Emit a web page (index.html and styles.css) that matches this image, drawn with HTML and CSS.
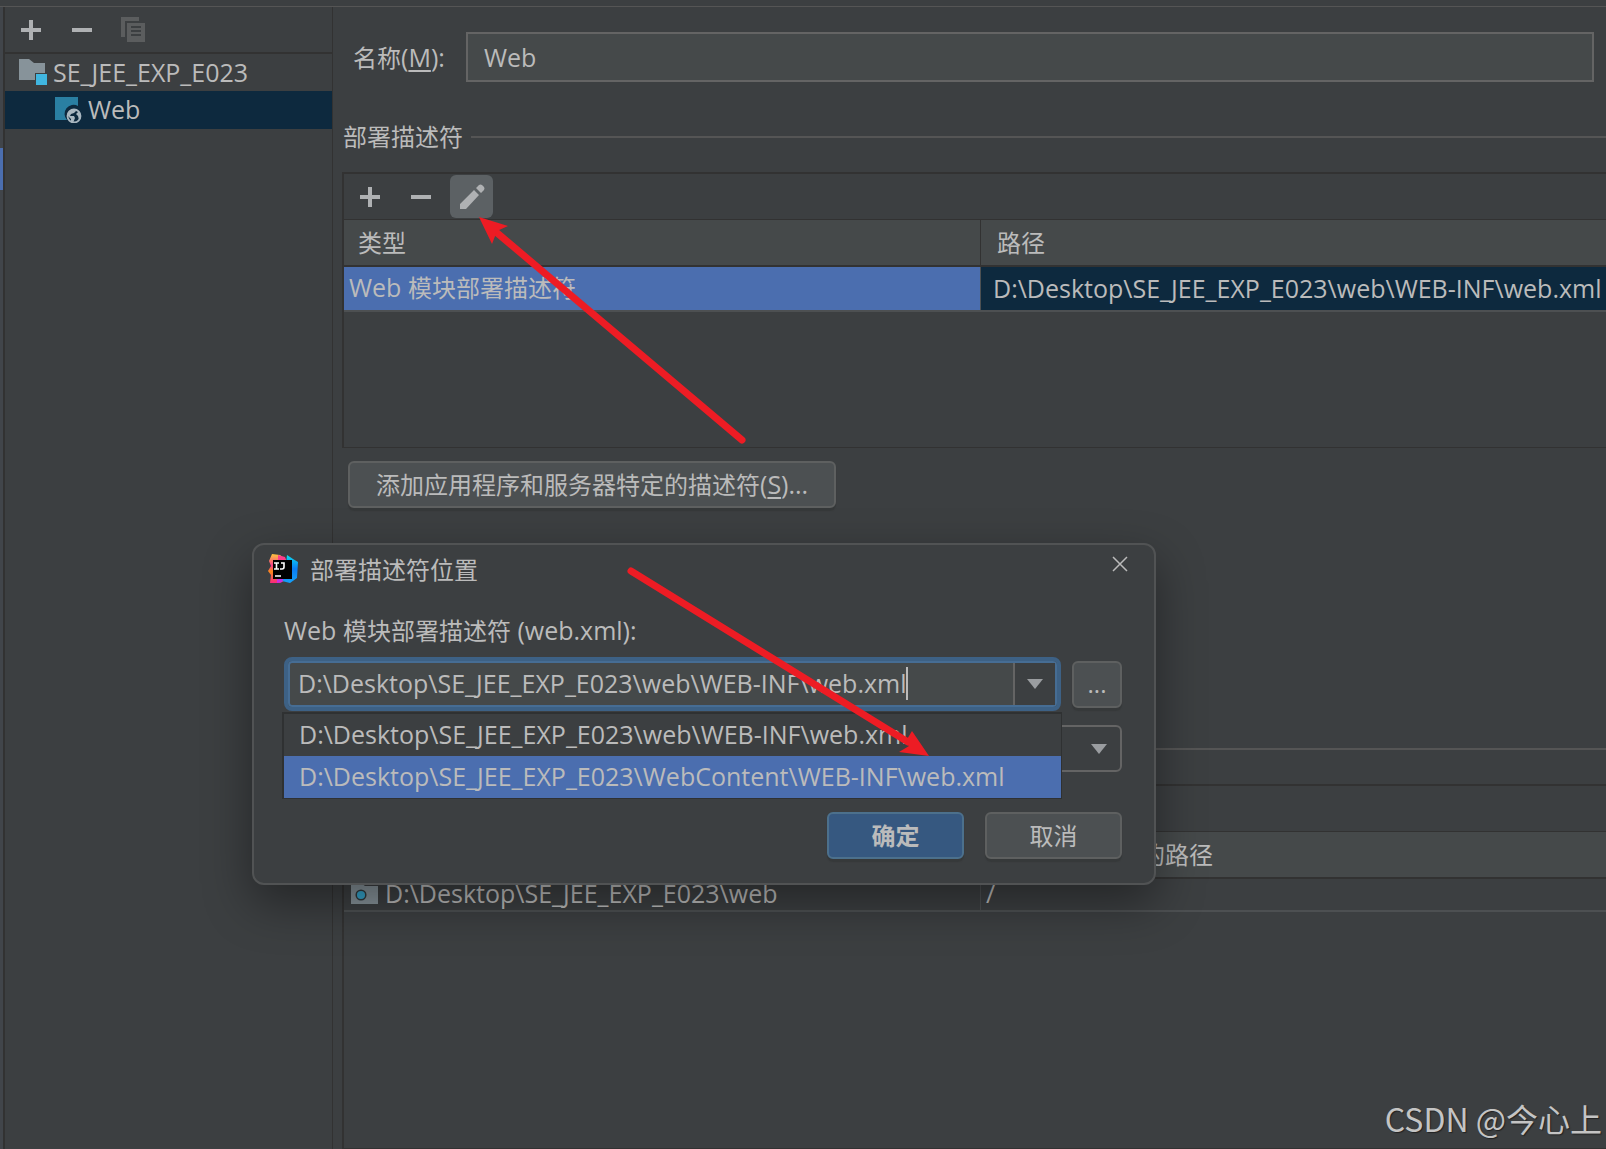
FILE: index.html
```html
<!DOCTYPE html>
<html lang="zh-CN">
<head>
<meta charset="utf-8">
<title>项目结构</title>
<link rel="stylesheet" href="styles.css">
</head>
<body>
<svg class="sprite" aria-hidden="true">
  <symbol id="plus" viewBox="0 0 20 20"><path d="M8 0h4v8h8v4h-8v8H8v-8H0V8h8z"/></symbol>
  <symbol id="minus" viewBox="0 0 20 20"><path d="M0 8h20v4H0z"/></symbol>
  <symbol id="down" viewBox="0 0 16 10"><path d="M0 0h16L8 10z"/></symbol>
</svg>

<div class="top-edge"></div>
<div class="window">
  <div class="strip"><div class="strip-mark"></div></div>

  <aside class="sidebar">
    <div class="toolbar side-toolbar">
      <button class="tool" aria-label="添加"><svg class="glyph"><use href="#plus"/></svg></button>
      <button class="tool" aria-label="移除"><svg class="glyph"><use href="#minus"/></svg></button>
      <button class="tool" aria-label="复制" disabled>
        <svg class="copy" viewBox="0 0 24 26"><path fill="#5b5d5e" d="M0 0h18v4H4v16H0z"/><path fill="#5b5d5e" fill-rule="evenodd" d="M6 6h18v19H6zM10 9v2h10V9zM10 13v2h10v-2zM10 17v2h10v-2z"/></svg>
      </button>
    </div>
    <ul class="tree">
      <li class="node">
        <svg class="node-icon" viewBox="0 0 30 28"><path fill="#87939a" d="M1 1h10l5 4h11v10H17v7H1z"/><path fill="#40b6e0" d="M18 16h11v11H18z"/></svg>
        <span class="latin">SE_JEE_EXP_E023</span>
      </li>
      <li class="node child selected">
        <svg class="node-icon" viewBox="0 0 30 28"><path fill="#2a7fa2" d="M2 2h23v9a9 9 0 0 0-11 14H2z"/><circle cx="21" cy="21" r="6.500" fill="none" stroke="#a9b7c0" stroke-width="1.800"/><path fill="#a9b7c0" d="M14 20l2-4 6-2 1 2-2 2-3 1-1 2h4l1 2-2 5-2-1v-3l-3-3zM26 16l2 5-2 4-1-4-2-2z"/></svg>
        <span class="latin">Web</span>
      </li>
    </ul>
  </aside>

  <main class="main">
    <div class="name-row">
      <label for="name">名称<span class="latin">(<u>M</u>):</span></label>
      <input id="name" class="name-input latin" type="text" value="Web">
    </div>

    <h2 class="section">部署描述符</h2>
    <section class="box descriptors">
      <div class="toolbar">
        <button class="tool" aria-label="添加"><svg class="glyph"><use href="#plus"/></svg></button>
        <button class="tool" aria-label="移除"><svg class="glyph"><use href="#minus"/></svg></button>
        <button class="tool active" aria-label="编辑">
          <svg class="pencil" viewBox="0 0 26 26"><path d="M1 20L15 6l5 5L7 25H1zM17 4l3-3q1.500-1 3 0l2 2q1 1.500 0 3l-3 3z"/></svg>
        </button>
      </div>
      <table class="grid">
        <colgroup><col class="col-first"><col></colgroup>
        <thead><tr><th>类型</th><th>路径</th></tr></thead>
        <tbody><tr class="picked"><td><span class="latin">Web </span>模块部署描述符</td><td class="latin">D:\Desktop\SE_JEE_EXP_E023\web\WEB-INF\web.xml</td></tr></tbody>
      </table>
    </section>
    <button class="btn add-specific">添加应用程序和服务器特定的描述符<span class="latin">(<u>S</u>)...</span></button>

    <div class="section resources-title"></div>
    <section class="box resources">
      <div class="toolbar"></div>
      <table class="grid compact">
        <colgroup><col class="col-first"><col></colgroup>
        <thead><tr><th></th><th>相对于部署根的路径</th></tr></thead>
        <tbody><tr>
          <td class="latin"><span class="with-icon"><svg class="folder" viewBox="0 0 27 21"><path fill="#87939a" d="M0 0h10l4 3h13v18H0z"/><circle cx="10" cy="12" r="4.800" fill="#35a4cc" stroke="#333a3d" stroke-width="1.500"/></svg>D:\Desktop\SE_JEE_EXP_E023\web</span></td>
          <td class="latin">/</td>
        </tr></tbody>
      </table>
    </section>
  </main>
</div>

<div class="dialog" role="dialog" aria-labelledby="dialog-title">
  <header class="dialog-head">
    <svg class="logo" viewBox="0 0 30 30">
      <defs>
        <linearGradient id="warm" x1="0" y1="0" x2="0" y2="1"><stop offset="0" stop-color="#fdc63a"/><stop offset=".4" stop-color="#fb3d8a"/><stop offset=".6" stop-color="#fb8a1c"/><stop offset="1" stop-color="#f9267f"/></linearGradient>
        <linearGradient id="cool" x1="0" y1="0" x2="0" y2="1"><stop offset="0" stop-color="#0bdcf0"/><stop offset=".5" stop-color="#0a7cf5"/><stop offset="1" stop-color="#15a2fa"/></linearGradient>
      </defs>
      <path fill="url(#warm)" d="M4 0l8 1 6 5v20l-6 3H2l1-8-3-4 3-5-2-5z"/>
      <path fill="#fb3d8a" d="M10 1l7 2 2 5h-9z"/>
      <path fill="url(#cool)" d="M19 1l6 4 5 3-1 16-7 5-8-2 3-6z"/>
      <path fill="#c52ee6" d="M9 23h7l-2 5-5 1z"/>
      <path fill="#000" d="M5 6h19v19H5z"/>
      <path fill="none" stroke="#fff" stroke-width="1.600" d="M6 9h5M8.500 9v6M6 15h5M13 9h3v4q0 2-2 2h-2M7 22h6"/>
    </svg>
    <h1 id="dialog-title" class="dialog-title">部署描述符位置</h1>
    <button class="close" aria-label="关闭"><svg class="cross" viewBox="0 0 16 16"><path d="M1 1l14 14M15 1L1 15"/></svg></button>
  </header>
  <div class="dialog-body">
    <label class="location-label" for="location"><span class="latin">Web </span>模块部署描述符<span class="latin"> (web.xml):</span></label>
    <div class="location-row">
      <div class="combo">
        <input id="location" class="combo-input latin" type="text" value="D:\Desktop\SE_JEE_EXP_E023\web\WEB-INF\web.xml">
        <span class="caret"></span>
        <button class="combo-toggle" aria-label="展开"><svg class="arrow"><use href="#down"/></svg></button>
        <ul class="popup latin" role="listbox" aria-label="位置">
          <li role="option">D:\Desktop\SE_JEE_EXP_E023\web\WEB-INF\web.xml</li>
          <li role="option" aria-selected="true" class="hot">D:\Desktop\SE_JEE_EXP_E023\WebContent\WEB-INF\web.xml</li>
        </ul>
      </div>
      <button class="btn browse">...</button>
    </div>
    <div class="version">
      <select class="version-select" aria-label="版本"><option></option></select>
      <svg class="arrow version-arrow"><use href="#down"/></svg>
    </div>
    <footer class="actions">
      <button class="btn action primary">确定</button>
      <button class="btn action">取消</button>
    </footer>
  </div>
</div>

<svg class="annotations" width="1000" height="800" viewBox="0 0 1000 800" aria-hidden="true">
  <g fill="none" stroke="#ed1c24" stroke-width="7" stroke-linecap="round"><path d="M742 440L496 232"/><path d="M631 571L908 742"/></g>
  <path fill="#ed1c24" d="M479 217l29 9-11 5-5 13zM929 756l-30-4 10-6-3-5 6-10z"/>
</svg>
<div class="watermark">CSDN @今心上</div>
</body>
</html>
```

FILE: styles.css
```css
* { box-sizing: border-box; }

body {
  margin: 0;
  height: 100vh;
  overflow: hidden;
  display: flex;
  flex-direction: column;
  position: relative;
  background: #3c3f41;
  color: #bbbbbb;
  font: 24px/36px "Open Sans", "Noto Sans CJK SC", sans-serif;
}

button, input, select { font: inherit; color: inherit; }
button { padding: 0; border: 0; background: none; }
ul { margin: 0; padding: 0; list-style: none; }
h1, h2 { margin: 0; font-size: 24px; font-weight: 400; }
svg { display: block; flex: none; }
u { text-decoration-thickness: 2px; text-underline-offset: 3px; }

/* Latin text is set a little larger than the Chinese text around it */
.latin { font-size: 25px; }

.sprite { position: absolute; width: 0; height: 0; }

.top-edge { height: 7px; flex: none; border-bottom: 1px solid #555555; }
.window { flex: 1; min-height: 0; display: flex; }

.strip { width: 5px; flex: none; border-right: 2px solid #323232; background: #41454a; }
.strip-mark { height: 42px; margin-top: 141px; background: #4b6eaf; }

/* sidebar */
.sidebar { width: 328px; flex: none; border-right: 1px solid #323232; }
.toolbar { height: 45px; display: flex; align-items: center; gap: 8px; padding-left: 4px; }
.side-toolbar { height: 47px; border-bottom: 2px solid #323232; }
.tool {
  width: 43px;
  height: 43px;
  display: flex;
  align-items: center;
  justify-content: center;
  border-radius: 6px;
}
.tool.active { background: #5c6164; }
.glyph { width: 20px; height: 20px; fill: #afb1b3; }
.copy { width: 24px; height: 26px; }
.pencil { width: 26px; height: 26px; fill: #afb1b3; }

.node { height: 37px; display: flex; align-items: center; gap: 5px; padding: 0 0 2px 13px; }
.node-icon { width: 30px; height: 28px; }
.node.child { padding-left: 48px; height: 38px; }
.node.selected { background: #0d293e; }

/* main panel */
.main { flex: 1; min-width: 0; display: flex; flex-direction: column; padding: 25px 0 0 9px; }
.name-row { display: flex; align-items: center; padding: 0 12px 0 11px; flex: none; }
.name-row label { width: 113px; }
.name-input {
  flex: 1;
  min-width: 0;
  height: 50px;
  padding: 0 16px;
  border: 2px solid #646464;
  background: #45494a;
}

.section { display: flex; align-items: center; gap: 8px; margin-top: 37px; padding-left: 1px; flex: none; }
.section::after { content: ""; flex: 1; height: 2px; background: #555555; }

.box { margin-top: 17px; border: solid #323232; border-width: 2px 0 1px 2px; overflow: hidden; }
.descriptors { height: 276px; flex: none; }
.resources-title { height: 36px; margin-top: 223px; }
.resources { flex: 1; }

.grid { width: 100%; table-layout: fixed; border-spacing: 0; border-top: 1px solid #323232; }
.col-first { width: 637px; }
.grid th {
  height: 47px;
  padding: 0 0 0 16px;
  text-align: left;
  font-weight: 400;
  background: #45494a;
  border-bottom: 2px solid #323232;
}
.grid th:first-child { padding-left: 14px; border-right: 1px solid #323232; }
.grid td {
  height: 45px;
  padding: 0 0 2px 12px;
  white-space: nowrap;
  border-bottom: 2px solid #4d5052;
}
.grid td:first-child { padding-left: 5px; border-right: 1px solid #4d5052; }
.picked td { background: #0d293e; }
.picked td:first-child { background: #4b6eaf; }
.compact td { height: 33px; padding: 0 0 2px 5px; line-height: 29px; }
.compact td:first-child { padding-left: 7px; }
.with-icon { display: flex; align-items: center; gap: 7px; }
.folder { width: 27px; height: 21px; }

.btn {
  height: 47px;
  border: 2px solid #5e6060;
  border-radius: 6px;
  background: #4c5052;
  box-shadow: 0 3px 1px #36393a;
}
.add-specific { flex: none; align-self: flex-start; margin: 13px 0 0 6px; padding: 0 26px; }

/* dialog */
.dialog {
  position: absolute;
  left: 252px;
  top: 543px;
  width: 904px;
  border: 2px solid #515354;
  border-radius: 12px;
  background: #3c3f41;
  box-shadow: 0 18px 48px rgba(0, 0, 0, .4);
}
.dialog-head { display: flex; align-items: flex-start; gap: 12px; padding: 7px 26px 0 14px; }
.logo { width: 30px; height: 30px; margin-top: 2px; }
.dialog-title { flex: 1; }
.close { margin-top: 4px; }
.cross { width: 16px; height: 16px; fill: none; stroke: #bbbbbb; stroke-width: 1.5; }

.dialog-body { display: flex; flex-direction: column; padding: 24px 32px 24px 30px; }
.location-label { height: 36px; white-space: pre; }
.location-row { display: flex; align-items: center; justify-content: space-between; margin-top: 9px; }
.combo {
  position: relative;
  display: flex;
  width: 777px;
  height: 54px;
  border: 4px solid #3d6185;
  border-radius: 8px;
  background: #45494a;
  box-shadow: inset 0 0 0 2px #466d94;
  padding: 2px;
}
.combo-input { flex: 1; min-width: 0; border: 0; background: none; padding: 0 8px 2px; outline: 0; }
.caret { position: absolute; left: 618px; top: 6px; width: 2px; height: 33px; background: #bbbbbb; }
.combo-toggle {
  width: 42px;
  display: flex;
  align-items: center;
  justify-content: center;
  border-left: 2px solid #646464;
  background: #3c3f41;
}
.arrow { width: 16px; height: 10px; fill: #9a9da0; }
.popup {
  position: absolute;
  left: -6px;
  top: 51px;
  width: 780px;
  z-index: 1;
  border: solid #2f3132;
  border-width: 2px 1px 1px 2px;
  background: #3c3f41;
}
.popup li { height: 42px; padding-left: 15px; line-height: 40px; white-space: nowrap; }
.popup .hot { background: #4b6eaf; }
.browse { width: 50px; }

.version { display: grid; align-items: center; justify-items: end; margin-top: 14px; }
.version-select {
  grid-area: 1 / 1;
  width: 100%;
  height: 47px;
  appearance: none;
  border: 2px solid #646464;
  border-radius: 6px;
  background: #3c3f41;
}
.version-arrow { grid-area: 1 / 1; margin-right: 15px; }

.actions { display: flex; justify-content: flex-end; gap: 21px; margin-top: 40px; }
.action { width: 137px; }
.primary { background: #365880; border-color: #4c708c; font-weight: 700; }

.annotations { position: absolute; left: 0; top: 0; z-index: 2; pointer-events: none; }
.watermark {
  position: absolute;
  right: 4px;
  bottom: 9px;
  font: 32px/44px "Noto Sans CJK SC", sans-serif;
  color: #c4c4c4;
  text-shadow: 1px 1px 1px #222222;
}
```
